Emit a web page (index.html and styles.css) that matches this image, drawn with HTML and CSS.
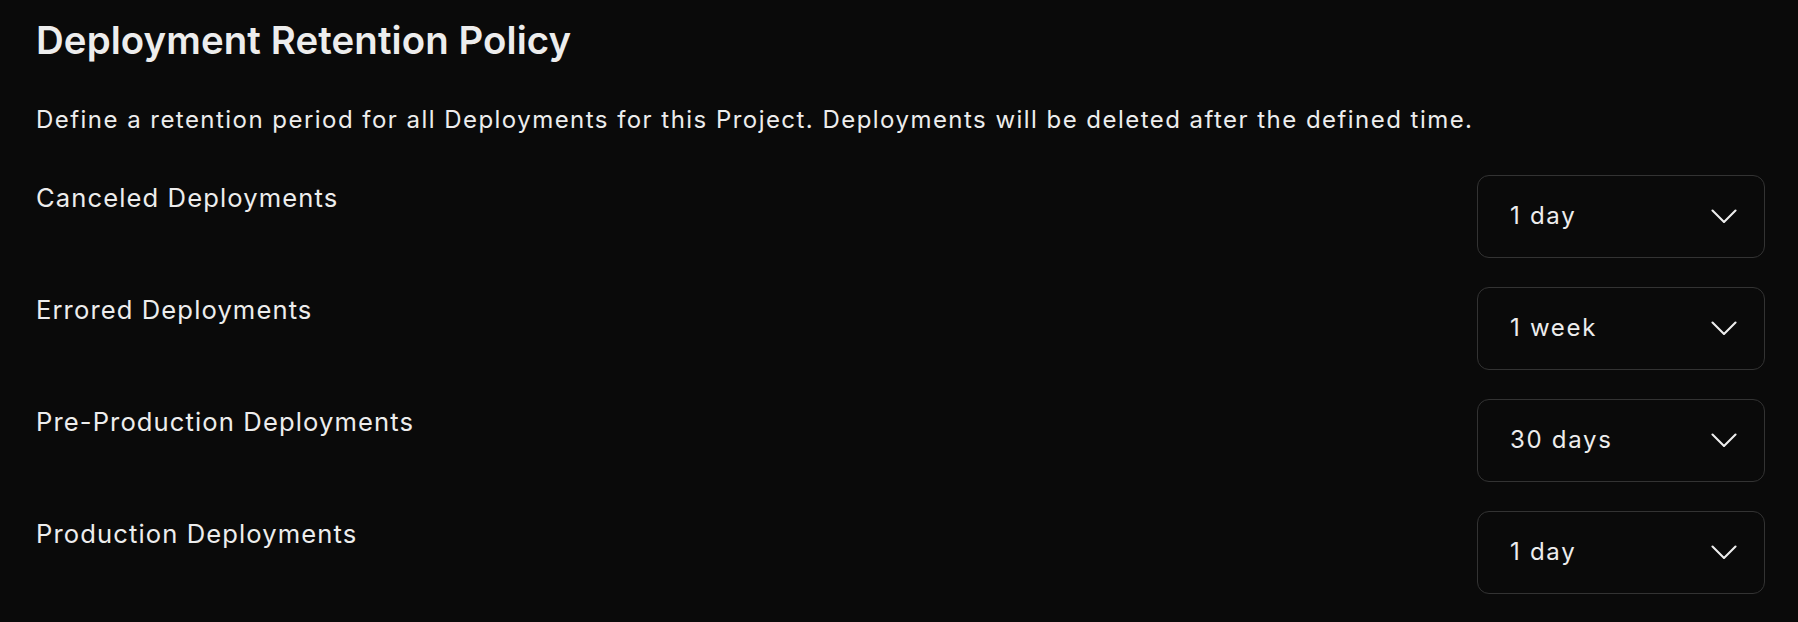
FILE: index.html
```html
<!DOCTYPE html>
<html lang="en">
<head>
<meta charset="utf-8">
<title>Deployment Retention Policy</title>
<link rel="stylesheet" href="styles.css">
</head>
<body>
<main class="page">
  <h1 class="title">Deployment Retention Policy</h1>
  <p class="desc">Define a retention period for all Deployments for this Project. Deployments will be deleted after the defined time.</p>
  <div class="rows">
    <div class="row">
      <span class="label">Canceled Deployments</span>
      <div class="select"><span class="value">1 day</span><svg class="chev" width="26" height="14" viewBox="0 0 26 14"><polyline points="1.5,1.5 13,13 24.5,1.5" fill="none" stroke="#ededed" stroke-width="2.1" stroke-linecap="round" stroke-linejoin="round"/></svg></div>
    </div>
    <div class="row">
      <span class="label">Errored Deployments</span>
      <div class="select"><span class="value">1 week</span><svg class="chev" width="26" height="14" viewBox="0 0 26 14"><polyline points="1.5,1.5 13,13 24.5,1.5" fill="none" stroke="#ededed" stroke-width="2.1" stroke-linecap="round" stroke-linejoin="round"/></svg></div>
    </div>
    <div class="row">
      <span class="label">Pre-Production Deployments</span>
      <div class="select"><span class="value">30 days</span><svg class="chev" width="26" height="14" viewBox="0 0 26 14"><polyline points="1.5,1.5 13,13 24.5,1.5" fill="none" stroke="#ededed" stroke-width="2.1" stroke-linecap="round" stroke-linejoin="round"/></svg></div>
    </div>
    <div class="row">
      <span class="label">Production Deployments</span>
      <div class="select"><span class="value">1 day</span><svg class="chev" width="26" height="14" viewBox="0 0 26 14"><polyline points="1.5,1.5 13,13 24.5,1.5" fill="none" stroke="#ededed" stroke-width="2.1" stroke-linecap="round" stroke-linejoin="round"/></svg></div>
    </div>
  </div>
</main>
</body>
</html>
```
FILE: styles.css
```css
html, body {
  margin: 0;
  padding: 0;
  background: #0a0a0a;
}
body {
  font-family: Inter, "Noto Sans", "Liberation Sans", sans-serif;
  color: #ededed;
}
.page {
  padding: 15.6px 33px 0 36px;
}
.title {
  margin: 0;
  font-size: 38.4px;
  line-height: 48px;
  font-weight: 600;
  letter-spacing: 0.1px;
}
.desc {
  margin: 38.8px 0 0;
  font-size: 24px;
  line-height: 36px;
  font-weight: 400;
  letter-spacing: 1.46px;
}
.rows {
  margin-top: 36.3px;
  display: flex;
  flex-direction: column;
  gap: 29px;
}
.row {
  display: flex;
  justify-content: space-between;
  align-items: flex-start;
}
.label {
  margin-top: 5px;
  font-size: 25.6px;
  line-height: 36px;
  font-weight: 400;
  letter-spacing: 1.1px;
}
.select {
  box-sizing: border-box;
  width: 288px;
  height: 83px;
  border: 1.5px solid #333333;
  border-radius: 12px;
  display: flex;
  align-items: center;
  justify-content: space-between;
  padding: 0 27px 0 32px;
}
.value {
  font-size: 24px;
  line-height: 36px;
  letter-spacing: 1.7px;
}
.chev {
  display: block;
}
```
